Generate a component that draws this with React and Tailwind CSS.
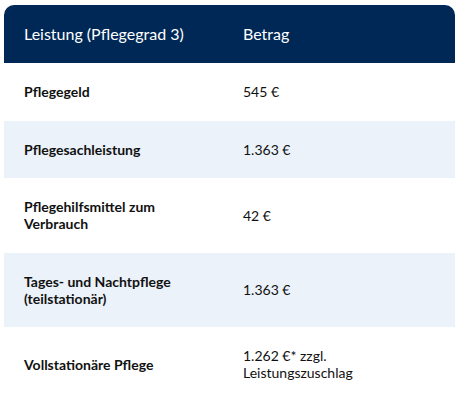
const rows = [
  { label: 'Pflegegeld', value: '545 €' },
  { label: 'Pflegesachleistung', value: '1.363 €' },
  { label: 'Pflegehilfsmittel zum Verbrauch', value: '42 €' },
  { label: 'Tages- und Nachtpflege (teilstationär)', value: '1.363 €' },
  { label: 'Vollstationäre Pflege', value: '1.262 €* zzgl. Leistungszuschlag' },
];

export default function App() {
  return (
    <div className="min-h-[414px] bg-white pl-[4px] pr-[5px] pt-[5px]" style={{ fontFamily: 'Lato, "Open Sans", sans-serif' }}>
      <div className="w-[451px]">
        <div className="grid h-[58px] grid-cols-[219px_1fr] items-center rounded-t-[10px] bg-[#002856] text-[16px] leading-[18px] text-white">
          <div className="pl-5">Leistung (Pflegegrad 3)</div>
          <div className="pl-5">Betrag</div>
        </div>
        {rows.map((row, i) => (
          <div
            key={row.label}
            className={`grid grid-cols-[219px_1fr] items-center text-[14px] leading-[17px] text-[#111] ${i % 2 === 1 ? 'bg-[#ebf2fa]' : 'bg-white'}`}
          >
            <div className="py-[20.25px] pl-5 pr-6 font-bold">{row.label}</div>
            <div className="py-[20.25px] pl-5 pr-10">{row.value}</div>
          </div>
        ))}
      </div>
    </div>
  );
}
